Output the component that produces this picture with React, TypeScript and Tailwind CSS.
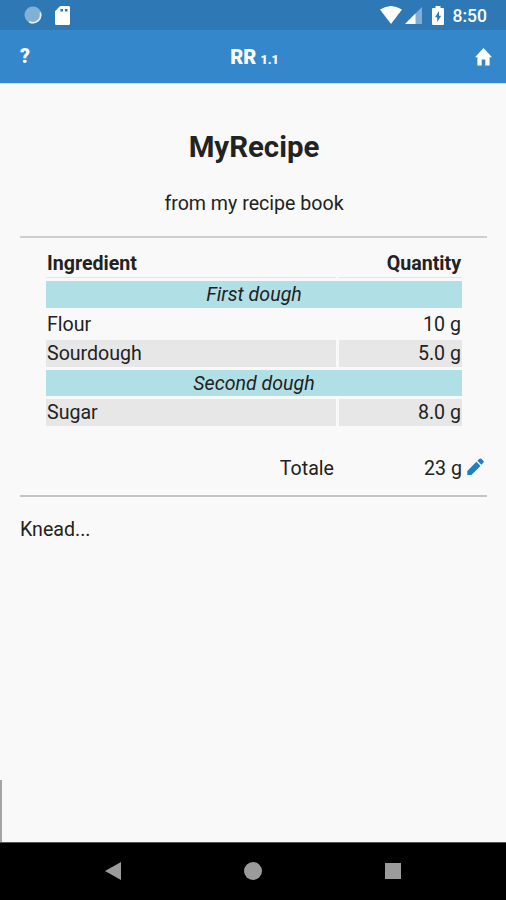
interface Ingredient {
  name: string;
  quantity: string;
  shaded: boolean;
}

interface Dough {
  title: string;
  ingredients: Ingredient[];
}

const doughs: Dough[] = [
  {
    title: "First dough",
    ingredients: [
      { name: "Flour", quantity: "10 g", shaded: false },
      { name: "Sourdough", quantity: "5.0 g", shaded: true },
    ],
  },
  {
    title: "Second dough",
    ingredients: [{ name: "Sugar", quantity: "8.0 g", shaded: true }],
  },
];

const StatusBar = () => (
  <div className="flex h-[30px] items-center justify-between bg-[#2e79b5] pl-6 pr-[19px] text-white">
    <div className="flex items-center gap-[13px]">
      <svg width="18" height="18" viewBox="0 0 18 18">
        <circle cx="9" cy="9" r="8.5" fill="#82b1d6" />
        <path
          d="M16.2 6.500A7.700 7.700 0 0 1 5.200 15.700"
          fill="none"
          stroke="#e6f1fa"
          strokeWidth="1.6"
        />
      </svg>
      <svg width="15" height="19" viewBox="0 0 15 19" fill="currentColor">
        <path
          fillRule="evenodd"
          d="M5.200 0H13.500Q15 0 15 1.500V17.500Q15 19 13.500 19H1.500Q0 19 0 17.500V5.200ZM5.400 3V5.600H8V3ZM9.900 3V5.600H12.500V3Z"
        />
      </svg>
    </div>
    <div className="flex items-center">
      <svg width="22" height="18" viewBox="0 0 22 18" fill="currentColor">
        <path d="M0 3.500Q11-3.500 22 3.500L11 18Z" />
      </svg>
      <svg
        className="ml-[3px]"
        width="17"
        height="17"
        viewBox="0 0 17 17"
        fill="currentColor"
      >
        <path d="M0 17L17 0V17Z" fillOpacity="0.4" />
        <path d="M0 17L10.500 6.500V17Z" />
      </svg>
      <svg
        className="ml-[10px]"
        width="12"
        height="19"
        viewBox="0 0 12 19"
        fill="currentColor"
      >
        <path
          fillRule="evenodd"
          d="M3.500 0H8.500V2H11Q12 2 12 3V18Q12 19 11 19H1Q0 19 0 18V3Q0 2 1 2H3.500ZM7 5L3 11.200H5.200V16L9.200 9.800H7Z"
        />
      </svg>
      <span className="ml-[9px] mt-1 text-[17.5px] font-medium leading-none">
        8:50
      </span>
    </div>
  </div>
);

const Header = () => (
  <header className="flex h-[53px] items-center justify-between bg-[#3587cb] pl-5 pr-[14px] text-white">
    <span className="mt-px w-[14px] text-[19.5px] font-black leading-none">
      ?
    </span>
    <h1 className="flex items-baseline gap-1 text-[20px] font-black leading-none">
      RR
      <span className="text-[12.5px]">1.1</span>
    </h1>
    <svg width="17" height="18" viewBox="0 0 17 18" fill="currentColor">
      <path d="M8.500 0L17 9.300H14.600V17.500H10.300V11.500H6.700V17.500H2.400V9.300H0Z" />
    </svg>
  </header>
);

const RecipeTable = () => (
  <div className="ml-[26px] mr-6 mt-3 flex flex-col gap-[3px]">
    <div className="flex h-[28px] gap-[3px] font-bold">
      <div className="w-[290px] border-b border-[#e5e5e5] pl-px">
        Ingredient
      </div>
      <div className="flex-1 border-b border-[#e5e5e5] pr-px text-right">
        Quantity
      </div>
    </div>
    {doughs.map((dough) => (
      <div className="flex flex-col gap-[3px]" key={dough.title}>
        <div className="h-[26.5px] bg-[#b0e0e6] text-center italic">
          {dough.title}
        </div>
        {dough.ingredients.map((item) => (
          <div className="flex h-[26.5px] gap-[3px]" key={item.name}>
            <div
              className={`w-[290px] pl-px ${item.shaded ? "bg-[#e7e7e7]" : ""}`}
            >
              {item.name}
            </div>
            <div
              className={`flex-1 pr-px text-right ${item.shaded ? "bg-[#e7e7e7]" : ""}`}
            >
              {item.quantity}
            </div>
          </div>
        ))}
      </div>
    ))}
  </div>
);

const NavigationBar = () => (
  <nav className="flex h-[58px] items-center justify-between border-t border-[#555] bg-black pb-px pl-[105px] pr-[105px] text-[#9b9b9b]">
    <svg width="16" height="18" viewBox="0 0 16 18" fill="currentColor">
      <path d="M0 9L16 0V18Z" />
    </svg>
    <div className="size-[18px] rounded-full bg-current" />
    <div className="size-4 bg-current" />
  </nav>
);

const App = () => {
  return (
    <div className="flex h-[900px] w-[506px] flex-col bg-[#f9f9f9] font-[Roboto,sans-serif] text-[19.6px] leading-[28px] text-[#222]">
      <StatusBar />
      <Header />
      <main className="flex flex-1 flex-col border-t border-[#dedede] px-5">
        <h2 className="ml-[2px] mt-[45px] text-center text-[29.4px] font-bold leading-[36px]">
          MyRecipe
        </h2>
        <p className="ml-[2px] mt-[25px] text-center">from my recipe book</p>
        <hr className="mr-[-1px] mt-[18px] border-t-2 border-[#cfcfcf]" />
        <RecipeTable />
        <div className="mt-[29px] flex items-center pr-[2px]">
          <span className="w-[314px] text-right">Totale</span>
          <span className="flex-1 text-right">23 g</span>
          <svg
            className="mb-1 ml-[5px]"
            width="17"
            height="18"
            viewBox="0 0 17 18"
            fill="#1e7fc8"
          >
            <path d="M0.300 13L9.400 3.800L13.500 7.900L4.300 17H0.300ZM10.400 2.800L12.500 0.800Q13.400 0 14.300 0.800L16.300 2.800Q17.100 3.700 16.300 4.700L14.400 6.800Z" />
          </svg>
        </div>
        <hr className="mr-[-1px] mt-3 border-t-2 border-[#c4c4c4]" />
        <p className="mt-[19px]">Knead...</p>
        <div className="-ml-5 mt-auto h-[62px] w-[2px] bg-[#a5a5a5]" />
      </main>
      <NavigationBar />
    </div>
  );
};

export default App;
